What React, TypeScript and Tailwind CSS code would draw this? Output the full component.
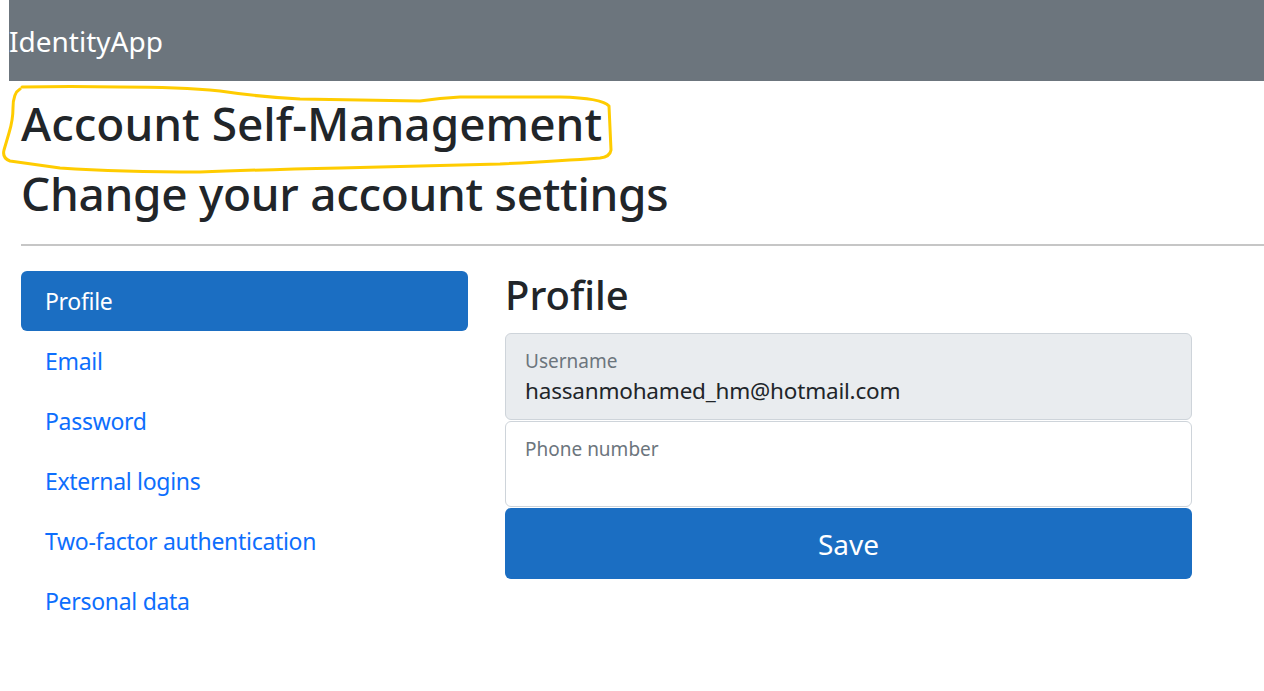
import React from "react";

const links = ["Email", "Password", "External logins", "Two-factor authentication", "Personal data"];

function Highlight() {
  return (
    <svg
      className="pointer-events-none absolute left-0 top-0"
      width="640"
      height="200"
      viewBox="0 0 640 200"
      fill="none"
    >
      <path
        d="M22 87 Q70 86 120 87 Q180 87 220 91 Q260 97 300 99 L420 101 Q440 98 460 97 L560 97 Q602 98 609 106 L611 150 Q610 157 600 158 Q560 161 500 164 L340 168 Q250 170 200 172 Q120 172 60 168 L10 161 Q2 158 4 150 L9 133 Q13 120 13 108 Q13 93 20 89"
        stroke="#ffcc00"
        strokeWidth="3"
        strokeLinecap="round"
        strokeLinejoin="round"
      />
    </svg>
  );
}

export default function App() {
  return (
    <div className="relative min-h-screen bg-white font-['Noto_Sans','Open_Sans',sans-serif] text-[#212529]">
      <nav className="ml-[9px] flex h-[81px] items-center bg-[#6c757d]">
        <span className="text-[28px] leading-none text-white">IdentityApp</span>
      </nav>

      <Highlight />

      <main className="pl-[21px]">
        <h1 className="mt-[15px] text-[46px] font-medium leading-[1.2]">Account Self-Management</h1>
        <h2 className="mt-[15px] text-[46px] font-medium leading-[1.2] tracking-[-0.3px]">
          Change your account settings
        </h2>
        <hr className="mt-[23px] border-t-2 border-[#c6c6c6]" />

        <div className="mt-[25px] flex gap-[37px]">
          <ul className="w-[447px] text-[23px] tracking-[-0.3px]">
            <li>
              <a className="flex h-[60px] items-center rounded-[6px] bg-[#1b6ec2] px-[24px] text-white">Profile</a>
            </li>
            {links.map((l) => (
              <li key={l}>
                <a className="flex h-[60px] items-center px-[24px] text-[#0d6efd]">{l}</a>
              </li>
            ))}
          </ul>

          <div className="w-[687px]">
            <h3 className="text-[40px] font-medium leading-[1.2]">Profile</h3>
            <div className="mt-[14px] flex h-[87px] flex-col rounded-[6px] border border-[#ced4da] bg-[#e9ecef] px-[19px] pt-[16px]">
              <span className="text-[19px] leading-tight text-[#6c757d]">Username</span>
              <span className="mt-[3px] text-[22.5px] leading-tight tracking-[-0.2px]">
                hassanmohamed_hm@hotmail.com
              </span>
            </div>
            <div className="mt-[1px] flex h-[86px] flex-col rounded-[6px] border border-[#ced4da] bg-white px-[19px] pt-[16px]">
              <span className="text-[19px] leading-tight text-[#6c757d]">Phone number</span>
            </div>
            <button className="mt-px flex h-[71px] w-full items-center justify-center rounded-[6px] bg-[#1b6ec2] text-[28px] text-white">
              Save
            </button>
          </div>
        </div>
      </main>
    </div>
  );
}
